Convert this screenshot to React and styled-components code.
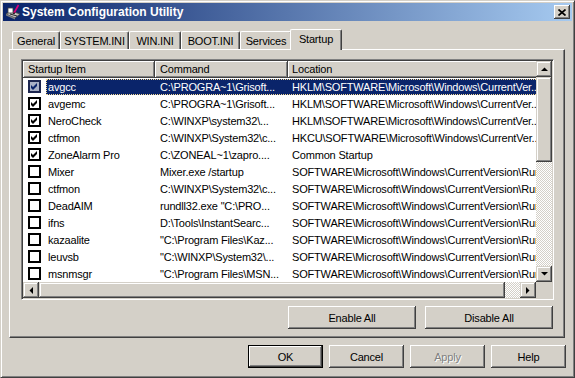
import React from "react";
import styled, { createGlobalStyle, css } from "styled-components";

const GlobalStyle = createGlobalStyle`
  html, body {
    margin: 0;
    padding: 0;
    background: #d4d0c8;
  }
  body {
    font-family: "Liberation Sans", Arial, sans-serif;
    font-size: 11px;
    letter-spacing: -0.18px;
    color: #000;
  }
`;

const raised = css`
  background: #d4d0c8;
  box-shadow: inset -1px -1px #404040, inset 1px 1px #fff,
    inset -2px -2px #808080, inset 2px 2px #d4d0c8;
`;

const scrollRaised = css`
  background: #d4d0c8;
  box-shadow: inset -1px -1px #404040, inset 1px 1px #d4d0c8,
    inset -2px -2px #808080, inset 2px 2px #fff;
`;

const dither = css`
  background: repeating-conic-gradient(#fff 0 25%, #d4d0c8 0 50%) 0 0 / 2px 2px;
`;

const Window = styled.div`
  width: 575px;
  height: 378px;
  box-sizing: border-box;
  border: 1px solid;
  border-color: #d4d0c8 #404040 #404040 #d4d0c8;
  box-shadow: inset 1px 1px #fff, inset -1px -1px #808080;
  padding: 2px;
  display: flex;
  flex-direction: column;
`;

const TitleBar = styled.div`
  height: 18px;
  flex-shrink: 0;
  display: flex;
  align-items: center;
  padding: 0 2px;
  background: linear-gradient(to right, #0a246a, #a6caf0);
`;

const Title = styled.span`
  margin-left: 1px;
  color: #fff;
  font-weight: bold;
  font-size: 12px;
  letter-spacing: 0;
  white-space: nowrap;
`;

const CloseButton = styled.div`
  ${raised};
  margin-left: auto;
  width: 16px;
  height: 14px;
  display: flex;
  align-items: center;
  justify-content: center;
`;

const Client = styled.div`
  flex: 1;
  display: flex;
  flex-direction: column;
  padding: 0 6px;
`;

const TabStrip = styled.div`
  margin-top: 8px;
  height: 20px;
  display: flex;
  align-items: flex-end;
  padding-left: 3px;
`;

const Tab = styled.div`
  box-sizing: border-box;
  width: ${(p) => p.$w}px;
  height: ${(p) => (p.$active ? 21 : 18)}px;
  margin: ${(p) => (p.$active ? "0 -2px -1px -2px" : "0")};
  position: relative;
  z-index: ${(p) => (p.$active ? 1 : 0)};
  background: #d4d0c8;
  border-top: 1px solid #fff;
  border-left: 1px solid #fff;
  border-right: 1px solid #404040;
  border-top-left-radius: 2px;
  border-top-right-radius: 2px;
  box-shadow: inset -1px 0 #808080;
  display: flex;
  align-items: center;
  justify-content: center;
  padding-bottom: ${(p) => (p.$active ? 3 : 0)}px;
  white-space: nowrap;
`;

const Panel = styled.div`
  box-sizing: border-box;
  height: 289px;
  margin-right: 1px;
  border: 1px solid;
  border-color: #fff #404040 #404040 #fff;
  box-shadow: inset -1px -1px #808080;
  padding: 9px 10px 0 11px;
  display: flex;
  flex-direction: column;
`;

const ListBox = styled.div`
  box-sizing: border-box;
  height: 241px;
  border: 1px solid;
  border-color: #808080 #fff #fff #808080;
  box-shadow: inset 1px 1px #404040, inset -1px -1px #d4d0c8;
  padding: 1px;
  display: grid;
  grid-template-columns: 1fr 16px;
  grid-template-rows: 1fr 16px;
  background: #fff;
`;

const ListContent = styled.div`
  overflow: hidden;
  background: #fff;
`;

const Header = styled.div`
  display: flex;
  height: 17px;
`;

const HeaderCell = styled.div`
  ${raised};
  box-sizing: border-box;
  flex-shrink: 0;
  width: ${(p) => p.$w}px;
  height: 17px;
  line-height: 16px;
  padding-left: ${(p) => p.$pad}px;
  white-space: nowrap;
`;

const Row = styled.div`
  display: flex;
  align-items: center;
  height: 17px;
`;

const Check = styled.span`
  box-sizing: border-box;
  flex-shrink: 0;
  width: 13px;
  height: 13px;
  margin-left: 5px;
  border: 2px solid ${(p) => (p.$sel ? "#1c2650" : "#000")};
  background: ${(p) => (p.$sel ? "#a9b1c6" : "#fff")};
  display: flex;
  align-items: center;
  justify-content: center;
`;

const Selection = styled.div`
  box-sizing: border-box;
  flex-shrink: 0;
  display: flex;
  align-items: center;
  height: 16px;
  margin-left: 5px;
  background: ${(p) => (p.$sel ? "#0a246a" : "transparent")};
  color: ${(p) => (p.$sel ? "#fff" : "#000")};
  outline: ${(p) => (p.$sel ? "1px dotted #f5db95" : "none")};
  outline-offset: -1px;
`;

const Cell = styled.span`
  box-sizing: border-box;
  flex-shrink: 0;
  width: ${(p) => p.$w}px;
  padding-left: ${(p) => p.$pad}px;
  white-space: nowrap;
  overflow: hidden;
`;

const VScroll = styled.div`
  display: flex;
  flex-direction: column;
`;

const HScroll = styled.div`
  display: flex;
`;

const ArrowButton = styled.div`
  ${scrollRaised};
  flex-shrink: 0;
  width: 16px;
  height: 16px;
  display: flex;
  align-items: center;
  justify-content: center;
`;

const Thumb = styled.div`
  ${scrollRaised};
  flex-shrink: 0;
  width: ${(p) => (p.$w ? `${p.$w}px` : "16px")};
  height: ${(p) => (p.$h ? `${p.$h}px` : "16px")};
`;

const Track = styled.div`
  ${dither};
  flex: 1;
`;

const Corner = styled.div`
  background: #d4d0c8;
`;

const ButtonRow = styled.div`
  display: flex;
  justify-content: flex-end;
  gap: ${(p) => p.$gap}px;
  margin-top: ${(p) => p.$top}px;
  margin-right: ${(p) => p.$right || 0}px;
`;

const Button = styled.button`
  ${raised};
  box-sizing: border-box;
  width: ${(p) => p.$w}px;
  height: 23px;
  margin: 0;
  padding: 0;
  border: ${(p) => (p.$default ? "1px solid #000" : "none")};
  font-family: "Liberation Sans", Arial, sans-serif;
  font-size: 11px;
  letter-spacing: -0.18px;
  color: ${(p) => (p.disabled ? "#808080" : "#000")};
  text-shadow: ${(p) => (p.disabled ? "1px 1px #fff" : "none")};
`;

const Arrow = ({ dir }) => {
  const pts = {
    up: "0,4 7,4 3.5,0.5",
    down: "0,0 7,0 3.5,3.5",
    left: "4,0 4,7 0.5,3.5",
    right: "0,0 0,7 3.5,3.5",
  }[dir];
  const vertical = dir === "up" || dir === "down";
  return (
    <svg width={vertical ? 7 : 4} height={vertical ? 4 : 7}>
      <polygon points={pts} fill="#000" />
    </svg>
  );
};

const CheckMark = ({ color }) => (
  <svg width="9" height="9" viewBox="0 0 9 9">
    <polygon points="1,3 3,5 7,1 7,4 3,8 1,6" fill={color} />
  </svg>
);

const AppIcon = () => (
  <svg width="16" height="16" viewBox="0 0 16 16">
    <polygon points="1,10 6,7 15,10 10,14" fill="#c0c0c0" stroke="#404040" strokeWidth="0.8" />
    <polygon points="1,10 10,14 10,15.5 1,11.5" fill="#808080" />
    <rect x="3" y="4" width="5" height="5" fill="#fff" stroke="#404040" strokeWidth="0.8" />
    <line x1="5" y1="10" x2="12" y2="12" stroke="#000" strokeWidth="0.8" />
    <line x1="9" y1="9" x2="13.5" y2="1" stroke="#e0007a" strokeWidth="1.6" />
    <line x1="8.6" y1="10" x2="9.4" y2="8.6" stroke="#000" strokeWidth="1.4" />
  </svg>
);

const CloseGlyph = () => (
  <svg width="8" height="7" viewBox="0 0 8 7">
    <path d="M0.5 0.5 L7.5 6.5 M7.5 0.5 L0.5 6.5" stroke="#000" strokeWidth="1.7" />
  </svg>
);

const HKLM = "HKLM\\SOFTWARE\\Microsoft\\Windows\\CurrentVer...";
const RUN = "SOFTWARE\\Microsoft\\Windows\\CurrentVersion\\Run";

const rows = [
  { name: "avgcc", cmd: "C:\\PROGRA~1\\Grisoft...", loc: HKLM, on: true, sel: true },
  { name: "avgemc", cmd: "C:\\PROGRA~1\\Grisoft...", loc: HKLM, on: true },
  { name: "NeroCheck", cmd: "C:\\WINXP\\system32\\...", loc: HKLM, on: true },
  { name: "ctfmon", cmd: "C:\\WINXP\\System32\\c...", loc: "HKCU\\SOFTWARE\\Microsoft\\Windows\\CurrentVer...", on: true },
  { name: "ZoneAlarm Pro", cmd: "C:\\ZONEAL~1\\zapro....", loc: "Common Startup", on: true },
  { name: "Mixer", cmd: "Mixer.exe /startup", loc: RUN },
  { name: "ctfmon", cmd: "C:\\WINXP\\System32\\c...", loc: RUN },
  { name: "DeadAIM", cmd: "rundll32.exe \"C:\\PRO...", loc: RUN },
  { name: "ifns", cmd: "D:\\Tools\\InstantSearc...", loc: RUN },
  { name: "kazaalite", cmd: "\"C:\\Program Files\\Kaz...", loc: RUN },
  { name: "leuvsb", cmd: "\"C:\\WINXP\\System32\\...", loc: RUN },
  { name: "msnmsgr", cmd: "\"C:\\Program Files\\MSN...", loc: RUN },
];

const tabs = [
  { label: "General", w: 48 },
  { label: "SYSTEM.INI", w: 69 },
  { label: "WIN.INI", w: 52 },
  { label: "BOOT.INI", w: 59 },
  { label: "Services", w: 52 },
  { label: "Startup", w: 52, active: true },
];

const App = () => (
  <>
    <GlobalStyle />
    <Window>
      <TitleBar>
        <AppIcon />
        <Title>System Configuration Utility</Title>
        <CloseButton>
          <CloseGlyph />
        </CloseButton>
      </TitleBar>
      <Client>
        <TabStrip>
          {tabs.map((t) => (
            <Tab key={t.label} $w={t.w} $active={t.active}>
              {t.label}
            </Tab>
          ))}
        </TabStrip>
        <Panel>
          <ListBox>
            <ListContent>
              <Header>
                <HeaderCell $w={132} $pad={5}>Startup Item</HeaderCell>
                <HeaderCell $w={133} $pad={5}>Command</HeaderCell>
                <HeaderCell $w={300} $pad={4}>Location</HeaderCell>
              </Header>
              {rows.map((r, i) => (
                <Row key={i}>
                  <Check $sel={r.sel}>
                    {r.on && <CheckMark color={r.sel ? "#0a246a" : "#000"} />}
                  </Check>
                  <Selection $sel={r.sel}>
                    <Cell $w={109} $pad={2}>{r.name}</Cell>
                    <Cell $w={133} $pad={5}>{r.cmd}</Cell>
                    <Cell $w={300} $pad={4}>{r.loc}</Cell>
                  </Selection>
                </Row>
              ))}
            </ListContent>
            <VScroll>
              <ArrowButton><Arrow dir="up" /></ArrowButton>
              <Thumb $h={85} />
              <Track />
              <ArrowButton><Arrow dir="down" /></ArrowButton>
            </VScroll>
            <HScroll>
              <ArrowButton><Arrow dir="left" /></ArrowButton>
              <Thumb $w={466} />
              <Track />
              <ArrowButton><Arrow dir="right" /></ArrowButton>
            </HScroll>
            <Corner />
          </ListBox>
          <ButtonRow $gap={9} $top={6} $right={1}>
            <Button $w={128}>Enable All</Button>
            <Button $w={128}>Disable All</Button>
          </ButtonRow>
        </Panel>
        <ButtonRow $gap={6} $top={7}>
          <Button $w={75} $default>OK</Button>
          <Button $w={75}>Cancel</Button>
          <Button $w={75} disabled>Apply</Button>
          <Button $w={75}>Help</Button>
        </ButtonRow>
      </Client>
    </Window>
  </>
);

export default App;
